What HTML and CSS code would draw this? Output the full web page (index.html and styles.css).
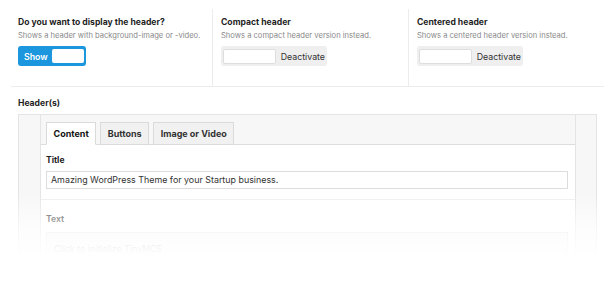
FILE: index.html
```html
<!DOCTYPE html>
<html lang="en">
<head>
<meta charset="utf-8">
<title>Header settings</title>
<link rel="stylesheet" href="styles.css">
</head>
<body>
<div class="page">
  <div class="settings">
    <div class="col col-first">
      <div class="opt-title">Do you want to display the header?</div>
      <div class="opt-desc">Shows a header with background-image or -video.</div>
      <div class="toggle on"><span class="toggle-label">Show</span><span class="knob"></span></div>
    </div>
    <div class="col">
      <div class="opt-title">Compact header</div>
      <div class="opt-desc">Shows a compact header version instead.</div>
      <div class="toggle off"><span class="knob"></span><span class="toggle-label">Deactivate</span></div>
    </div>
    <div class="col">
      <div class="opt-title">Centered header</div>
      <div class="opt-desc">Shows a centered header version instead.</div>
      <div class="toggle off"><span class="knob"></span><span class="toggle-label">Deactivate</span></div>
    </div>
  </div>

  <div class="section">
    <div class="section-label">Header(s)</div>
    <div class="repeater">
      <div class="strip"></div>
      <div class="panel">
        <div class="tabs">
          <div class="tab active">Content</div>
          <div class="tab">Buttons</div>
          <div class="tab">Image or Video</div>
        </div>
        <div class="field">
          <div class="field-label">Title</div>
          <div class="input">Amazing WordPress Theme for your Startup business.</div>
        </div>
        <div class="field field-text">
          <div class="field-label">Text</div>
          <div class="textarea">Click to initialize TinyMCE</div>
        </div>
      </div>
      <div class="strip"></div>
    </div>
  </div>
  <div class="fade"></div>
</div>
</body>
</html>
```
FILE: styles.css
```css
html, body {
  margin: 0;
  padding: 0;
  background: #fff;
}
body {
  font-family: "Inter", "Liberation Sans", sans-serif;
  color: #222;
  width: 616px;
  height: 293px;
  overflow: hidden;
}
.page {
  position: relative;
  height: 293px;
}
.settings {
  margin: 9px 12px 0 11px;
  display: grid;
  grid-template-columns: 201px 196px 196px;
  border-bottom: 1px solid #ececec;
}
.col {
  padding: 7px 0 20px 8px;
  border-left: 1px solid #ececec;
}
.col-first {
  border-left: none;
  padding-left: 7px;
}
.opt-title {
  font-size: 8.6px;
  font-weight: 700;
  line-height: 13px;
  color: #1e1e1e;
}
.opt-desc {
  font-size: 7.6px;
  line-height: 13px;
  color: #8a8a8a;
}
.toggle {
  margin-top: 4px;
  height: 20px;
  border-radius: 3px;
  display: flex;
  align-items: center;
  box-sizing: border-box;
}
.toggle.on {
  width: 68px;
  background: #1c96dd;
  padding: 0 2px 0 6px;
}
.toggle.on .toggle-label {
  color: #fff;
  font-size: 8.8px;
  font-weight: 600;
  flex: 1;
}
.toggle.on .knob {
  width: 32px;
  height: 14px;
  background: #fff;
  border-radius: 2px;
}
.toggle.off {
  width: 106px;
  background: #efefef;
  padding: 0 2px;
}
.toggle.off .knob {
  width: 53px;
  height: 15px;
  box-sizing: border-box;
  background: #fff;
  border: 1px solid #dedede;
  border-radius: 2px;
}
.toggle.off .toggle-label {
  margin-left: 5px;
  font-size: 8.8px;
  color: #333;
}
.section {
  margin: 10px 19px 0 18px;
}
.section-label {
  font-size: 8.6px;
  font-weight: 700;
  line-height: 13px;
  color: #1e1e1e;
  margin-bottom: 4px;
}
.repeater {
  border: 1px solid #e4e4e4;
  background: #f7f7f7;
  display: grid;
  grid-template-columns: 21px 1fr 20px;
  height: 160px;
}
.panel {
  background: #fff;
  border-left: 1px solid #e4e4e4;
  border-right: 1px solid #e4e4e4;
}
.tabs {
  display: flex;
  gap: 4px;
  padding: 7px 0 0 5px;
  background: #f7f7f7;
  border-bottom: 1px solid #dddddd;
}
.tab {
  box-sizing: border-box;
  margin-bottom: -1px;
  height: 23px;
  padding: 0 6.5px;
  border: 1px solid #dadada;
  background: #f1f1f1;
  font-size: 9px;
  font-weight: 700;
  color: #333;
  display: flex;
  align-items: center;
}
.tab.active {
  background: #fff;
  border-bottom-color: #fff;
  color: #111;
}
.field {
  padding: 9px 7px 10px 5px;
}
.field-label {
  font-size: 8.5px;
  font-weight: 700;
  line-height: 13px;
  color: #222;
}
.input {
  margin-top: 4px;
  height: 18px;
  box-sizing: border-box;
  border: 1px solid #dcdcdc;
  padding: 0 4px;
  font-size: 8.9px;
  line-height: 16px;
  color: #333;
}
.field-text {
  border-top: 1px solid #eeeeee;
  padding-top: 13px;
}
.field-text .field-label {
  color: #333;
}
.textarea {
  margin-top: 6px;
  height: 30px;
  box-sizing: border-box;
  border: 1px solid #e2e2e2;
  background: #f6f6f6;
  padding: 10px 7px 0;
  font-size: 8.9px;
  color: #888;
}
.fade {
  position: absolute;
  left: 0;
  right: 0;
  top: 184px;
  bottom: 0;
  background: linear-gradient(to bottom, rgba(255,255,255,0) 0px, rgba(255,255,255,0.65) 32px, rgba(255,255,255,0.96) 60px, #fff 70px);
}
```
